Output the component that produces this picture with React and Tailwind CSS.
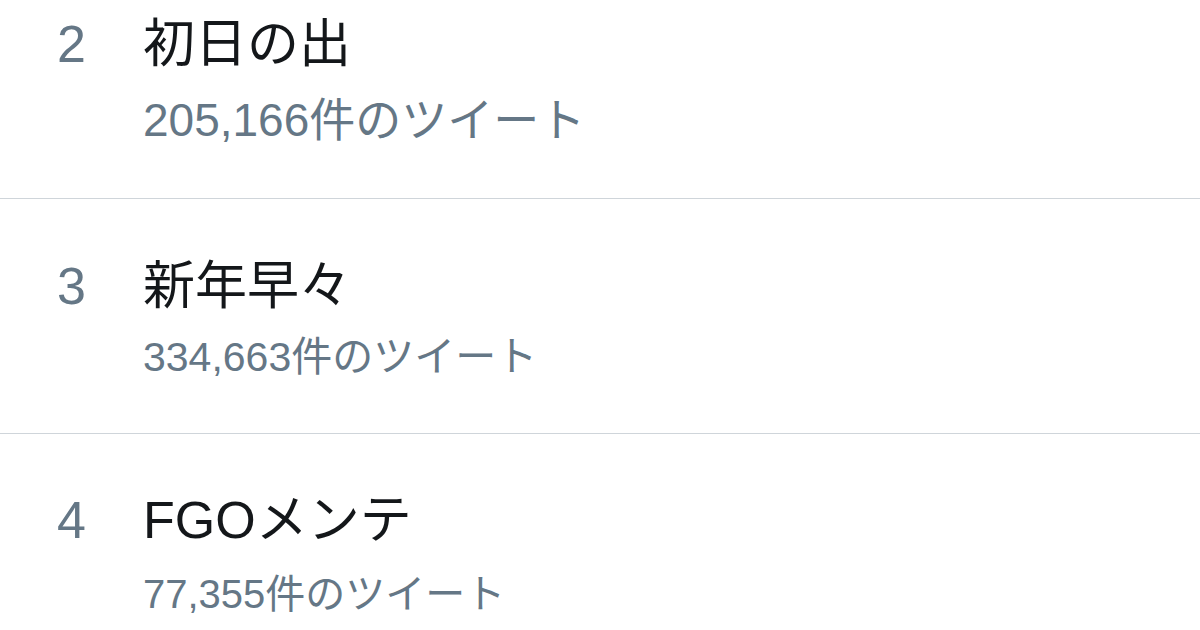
import React from "react";

const rows = [
  { n: "2", title: "初日の出", sub: "205,166件のツイート", h: "h-[199px]", pt: "pt-[14px]", subSize: "text-[46px]", mt: "mt-[19px]", border: true },
  { n: "3", title: "新年早々", sub: "334,663件のツイート", h: "h-[235px]", pt: "pt-[57px]", subSize: "text-[41px]", mt: "mt-[14px]", border: true },
  { n: "4", title: "FGOメンテ", sub: "77,355件のツイート", h: "h-[195px]", pt: "pt-[56px]", subSize: "text-[40px]", mt: "mt-[17px]", border: false },
];

export default function App() {
  return (
    <div
      className="w-[1200px] h-[630px] overflow-hidden bg-white flex flex-col"
      style={{ fontFamily: '"Liberation Sans", "Noto Sans CJK JP", sans-serif' }}
    >
      {rows.map((r, i) => (
        <div
          key={i}
          className={`${r.h} ${r.pt} shrink-0 pl-[57px] flex ${r.border ? "border-b border-[#cfd5da]" : ""}`}
        >
          <div className="w-[86px] shrink-0 text-[52px] leading-[60px] text-[#657786]">{r.n}</div>
          <div className="flex flex-col">
            <div className="text-[52px] leading-[60px] text-[#14171a]">{r.title}</div>
            <div className={`${r.subSize} ${r.mt} leading-[54px] text-[#657786]`}>{r.sub}</div>
          </div>
        </div>
      ))}
    </div>
  );
}
